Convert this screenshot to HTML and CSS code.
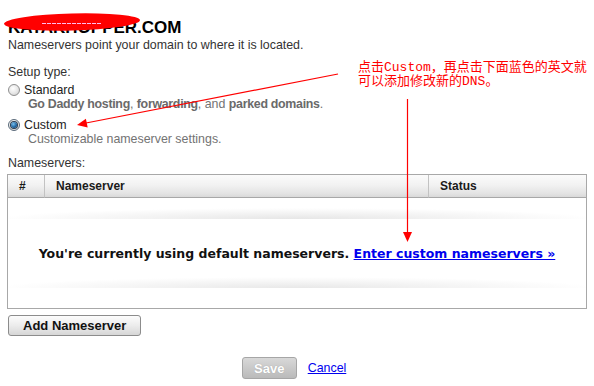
FILE: index.html
```html
<!doctype html>
<html lang="en">
<head>
    <meta charset="UTF-8">
    <title>Nameservers</title>
    <link rel="stylesheet" href="styles.css">
</head>
<body>
    <div class="page">
        <h1 class="domain">KAYAKHOPPER.COM</h1>
        <p class="intro">Nameservers point your domain to where it is located.</p>

        <!-- Setup type -->
        <p class="field-label">Setup type:</p>
        <div class="option">
            <label class="option-row"><span class="radio"></span>Standard</label>
            <p class="option-desc"><b>Go Daddy hosting</b>, <b>forwarding</b>, and <b>parked domains</b>.</p>
        </div>
        <div class="option option-custom">
            <label class="option-row"><span class="radio checked"></span>Custom</label>
            <p class="option-desc">Customizable nameserver settings.</p>
        </div>

        <!-- Nameserver list -->
        <p class="field-label ns-label">Nameservers:</p>
        <table class="ns-table">
            <thead>
                <tr>
                    <th class="col-num">#</th>
                    <th class="col-name">Nameserver</th>
                    <th class="col-status">Status</th>
                </tr>
            </thead>
            <tbody>
                <tr class="row-gap"><td colspan="3"></td></tr>
                <tr class="row-msg">
                    <td colspan="3">You're currently using default nameservers. <a href="#">Enter custom nameservers »</a></td>
                </tr>
                <tr class="row-end"><td colspan="3"></td></tr>
            </tbody>
        </table>

        <button class="btn-add">Add Nameserver</button>

        <div class="actions">
            <button class="btn-save" disabled>Save</button>
            <a href="#" class="cancel">Cancel</a>
        </div>
    </div>

    <!-- Annotation drawn over the screenshot -->
    <svg class="markup" width="594" height="386" viewBox="0 0 594 386">
        <ellipse cx="72" cy="22" rx="68" ry="8.5" fill="#f00" transform="rotate(-1.5 72 22)"/>
        <line x1="42" y1="23.5" x2="102" y2="23.5" stroke="#fbe" stroke-width="1" stroke-dasharray="4 1"/>
        <line x1="338" y1="74" x2="86" y2="123" stroke="#f00" stroke-width="1.2"/>
        <polygon points="77,125 87.7,127.5 85.9,118.7" fill="#f00"/>
        <line x1="407.5" y1="99" x2="407.5" y2="233" stroke="#f00" stroke-width="1.2"/>
        <polygon points="403,232 412,232 407.5,242" fill="#f00"/>
    </svg>
    <div class="note">点击Custom，再点击下面蓝色的英文就<br>可以添加修改新的DNS。</div>
</body>
</html>
```

FILE: styles.css
```css
* {
    margin: 0;
    padding: 0;
    box-sizing: border-box;
}

body {
    font-family: 'Liberation Sans', Arial, sans-serif;
    font-size: 12.4px;
    line-height: 14px;
    color: #222;
    background: #fff;
    position: relative;
}

.page {
    padding: 18px 8px 0 8px;
}

/* Title */
.domain {
    font-size: 17px;
    line-height: 20px;
    font-weight: bold;
    color: #000;
}

.intro {
    color: #333;
}

.field-label {
    margin-top: 13px;
    color: #333;
}

/* Radio options */
.option {
    margin-top: 4px;
}

.option-custom {
    margin-top: 7px;
}

.option-row {
    display: flex;
    align-items: center;
    gap: 4px;
    color: #222;
}

.radio {
    width: 12px;
    height: 12px;
    border-radius: 50%;
    border: 1px solid #8f8f8f;
    background: radial-gradient(circle at 40% 35%, #fff, #e6e6e6 55%, #c8c8c8);
    display: flex;
    align-items: center;
    justify-content: center;
}

.radio.checked {
    border-color: #5a6a7a;
}

.radio.checked::after {
    content: "";
    width: 6px;
    height: 6px;
    border-radius: 50%;
    background: radial-gradient(circle at 40% 35%, #7ac0ec, #1a5f9c 60%, #0b3a66);
    box-shadow: 0 0 0 1px #2b3d50;
}

.option-desc {
    padding-left: 20px;
    color: #737373;
}

.option-desc b {
    color: #6a6a6a;
    letter-spacing: -0.3px;
}

.ns-label {
    margin-top: 10px;
}

/* Table */
.ns-table {
    margin-top: 4px;
    margin-left: -1px;
    width: 580px;
    border: 1px solid #a8a8a8;
    border-spacing: 0;
    font-size: 12px;
}

.ns-table th {
    height: 23px;
    padding: 0 0 0 11px;
    text-align: left;
    font-weight: bold;
    color: #1a1a1a;
    background: linear-gradient(#fbfbfb, #f2f2f2 45%, #e3e3e3 85%, #d9d9d9);
    border-bottom: 1px solid #a8a8a8;
}

.ns-table th + th {
    border-left: 1px solid #c2c2c2;
}

.col-num {
    width: 36px;
}

.col-name {
    width: 384px;
}

.row-gap td {
    height: 21px;
    padding: 0;
    background: radial-gradient(ellipse 300px 11px at 50% 100%, #e6e6e6, #fff);
}

.row-msg td {
    height: 69px;
    padding: 0;
    text-align: center;
    font-family: 'DejaVu Sans', sans-serif;
    font-size: 12.5px;
    font-weight: bold;
    color: #111;
    background: radial-gradient(ellipse 300px 11px at 50% 100%, #e8e8e8, #fff) no-repeat;
}

.row-msg a {
    color: #0000ee;
    text-decoration: underline;
}

.row-end td {
    height: 20px;
    padding: 0;
}

/* Buttons */
.btn-add {
    margin-top: 6px;
    height: 21px;
    padding: 0 14px;
    font-family: 'Liberation Sans', Arial, sans-serif;
    font-size: 13px;
    font-weight: bold;
    color: #111;
    border: 1px solid #8c8c8c;
    border-radius: 3px;
    background: linear-gradient(#fcfcfc, #ececec 50%, #d6d6d6);
}

.actions {
    margin-top: 21px;
    display: flex;
    justify-content: center;
    align-items: center;
    gap: 11px;
    padding-right: 6px;
}

.btn-save {
    width: 55px;
    height: 22px;
    font-family: 'Liberation Sans', Arial, sans-serif;
    font-size: 13px;
    font-weight: bold;
    color: #fff;
    text-shadow: 0 0 1px #9a9a9a;
    border: 1px solid #a6a6a6;
    border-radius: 3px;
    background: linear-gradient(#d8d8d8, #c9c9c9 50%, #bababa);
}

.cancel {
    color: #0000ee;
    text-decoration: underline;
}

/* Red annotation */
.markup {
    position: absolute;
    top: 0;
    left: 0;
    pointer-events: none;
}

.note {
    position: absolute;
    left: 358px;
    top: 61px;
    font-family: 'Liberation Mono', 'Noto Sans CJK SC', monospace;
    font-size: 13px;
    line-height: 14px;
    color: #f00;
    white-space: nowrap;
}
```
